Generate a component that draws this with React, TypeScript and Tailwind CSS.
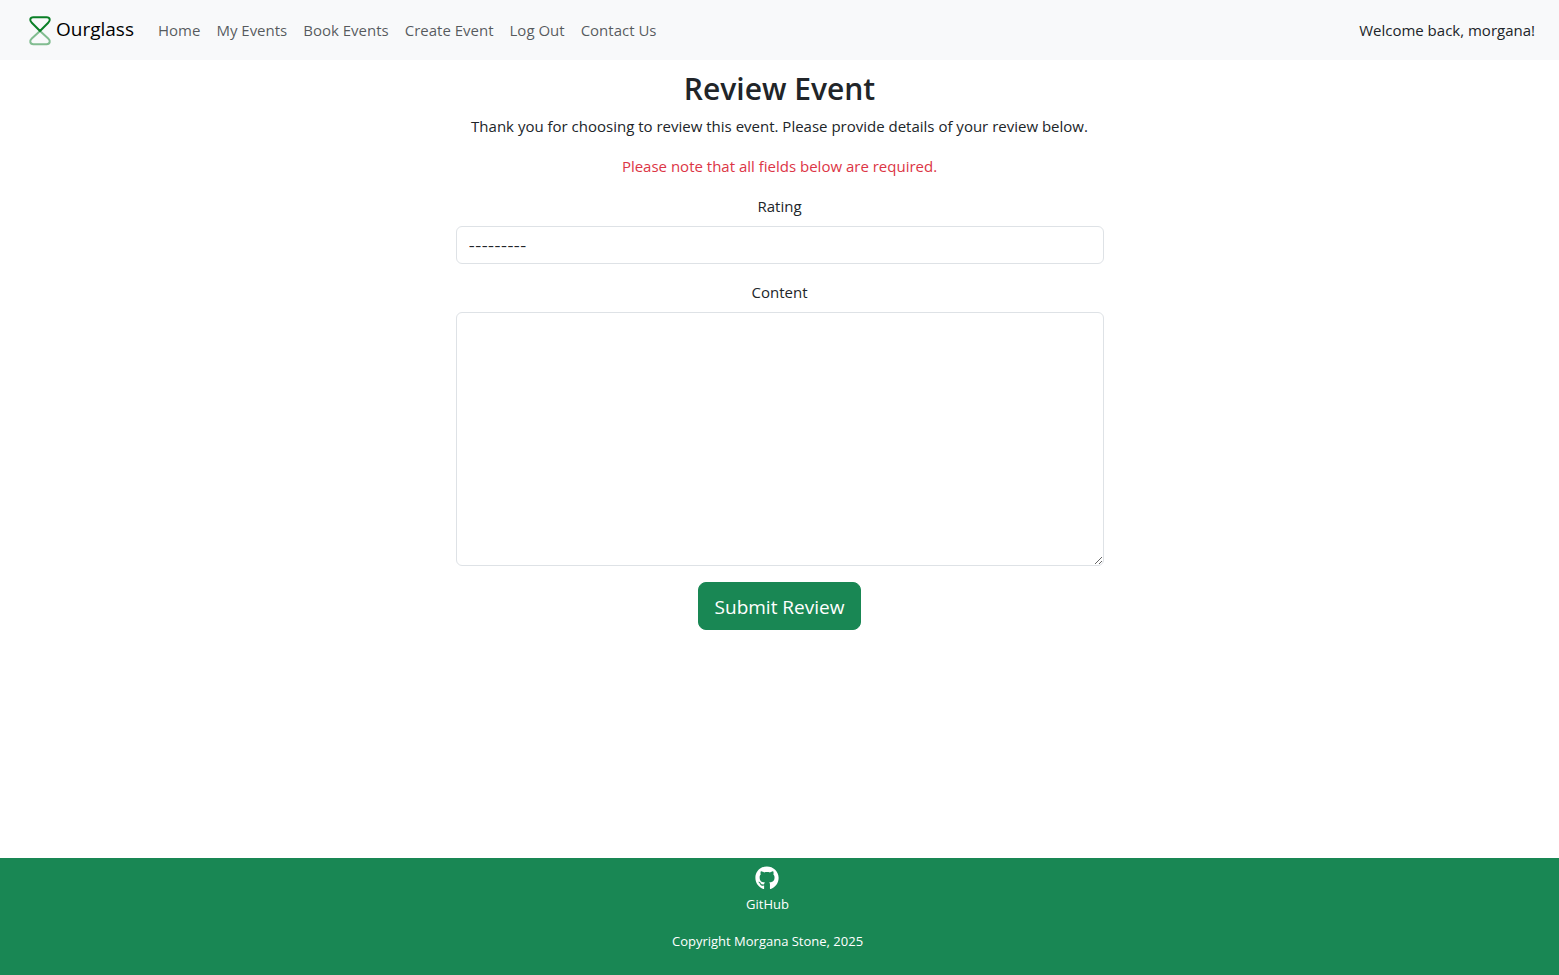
import React from "react";
import { FaGithub } from "react-icons/fa6";

const links = ["Home", "My Events", "Book Events", "Create Event", "Log Out", "Contact Us"];

function HourglassLogo() {
  return (
    <svg viewBox="0 0 32 32" className="size-8" fill="none" stroke="#0a7f26" strokeWidth="2" strokeLinejoin="round" aria-hidden="true">
      <path opacity="0.5" d="M16 17 L24.2 24.4 C25.6 25.7 25.9 27 25.7 28 C25.4 29.6 24.2 30.2 22.6 30.2 H9.4 C7.8 30.2 6.6 29.6 6.3 28 C6.1 27 6.4 25.7 7.8 24.4 Z" />
      <path d="M16 17 L24.2 8.8 C25.6 7.4 25.9 6.2 25.7 5.2 C25.4 3.9 24.2 3.3 22.6 3.3 H9.4 C7.8 3.3 6.6 3.9 6.3 5.2 C6.1 6.2 6.4 7.4 7.8 8.8 Z" />
    </svg>
  );
}

export default function App() {
  return (
    <div className="flex min-h-screen flex-col bg-white font-['Open_Sans','Noto_Sans',sans-serif] text-[15px] leading-6 text-[#212529]">
      <header className="flex flex-wrap items-center bg-[#f8f9fa] px-6 py-2">
        <a href="#" className="mr-4 flex h-11 items-center text-[19px] text-black">
          <HourglassLogo />
          <span className="pb-0.5">Ourglass</span>
        </a>
        <nav className="flex flex-wrap items-center">
          {links.map((label) => (
            <a key={label} href="#" className="px-2 py-2 text-[#212529]/75">
              {label}
            </a>
          ))}
        </nav>
        <span className="ml-auto">Welcome back, morgana!</span>
      </header>

      <main className="mx-auto flex w-full max-w-[648px] flex-1 flex-col items-center pt-2 text-center">
        <h1 className="mb-1 text-[30px] leading-[42px] font-semibold">Review Event</h1>
        <p className="mb-4">Thank you for choosing to review this event. Please provide details of your review below.</p>
        <p className="mb-4 text-[#dc3545]">Please note that all fields below are required.</p>
        <form className="flex w-full flex-col items-center" onSubmit={(e) => e.preventDefault()}>
          <label htmlFor="rating" className="mb-2">Rating</label>
          <select
            id="rating"
            defaultValue=""
            className="mb-4 h-[38px] w-full appearance-none rounded-md border border-[#dee2e6] bg-white px-3 pt-0.5 font-[Inter,sans-serif] text-sm"
          >
            <option value="">---------</option>
            <option value="1">1</option>
            <option value="2">2</option>
            <option value="3">3</option>
            <option value="4">4</option>
            <option value="5">5</option>
          </select>
          <label htmlFor="content" className="mb-2">Content</label>
          <textarea
            id="content"
            rows={10}
            className="mb-4 h-[254px] w-full resize-y rounded-md border border-[#dee2e6] bg-white px-3 py-1.5"
          />
          <button type="submit" className="h-12 rounded-lg border border-[#198754] bg-[#198754] px-4 pt-0.5 text-[19px] text-white">
            Submit Review
          </button>
        </form>
      </main>

      <footer className="flex flex-col items-center bg-[#198754] pt-2 pr-6 pb-[23px] text-[13px] leading-[21px] text-white">
        <a href="#" className="mb-4 flex flex-col items-center gap-1">
          <FaGithub className="size-6" aria-hidden="true" />
          GitHub
        </a>
        <p>Copyright Morgana Stone, 2025</p>
      </footer>
    </div>
  );
}
